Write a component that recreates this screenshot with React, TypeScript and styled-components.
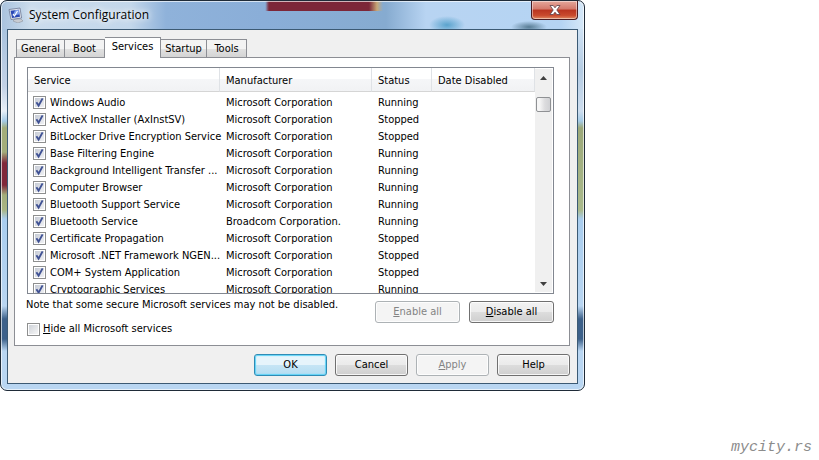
import React, { useState } from 'react';
import styled, { createGlobalStyle, css } from 'styled-components';

const uiFont = 'Tahoma, "DejaVu Sans Condensed", "Noto Sans", sans-serif';
const titleFont = '"Segoe UI", "Open Sans", "Noto Sans", sans-serif';

const GlobalStyle = createGlobalStyle`
  *, *::before, *::after { box-sizing: border-box; }
  html, body, #root { height: 100%; }
  body {
    margin: 0;
    background: #fff;
    color: #000;
    font-family: ${uiFont};
    font-size: 11px;
    line-height: 16px;
  }
  button, input { font: inherit; color: inherit; margin: 0; }
`;

const Page = styled.div`
  display: flex;
  flex-direction: column;
  justify-content: space-between;
  min-height: 100%;
`;

const Window = styled.main`
  width: 100%;
  max-width: 585px;
  padding: 0 6px 6px;
  border: 1px solid #1f2b38;
  border-radius: 7px;
  box-shadow: inset 0 0 0 1px rgba(255, 255, 255, 0.65);
  background:
    linear-gradient(90deg, #a9c2dd 0, #cbdcec 30px, #c3d7eb 130px, #8fb2da 165px, #8aaed8 262px, transparent 266px) 0 0 / 100% 28px no-repeat,
    linear-gradient(90deg, transparent 264px, #7c2638 268px, #7c2638 368px, #c7a877 376px, transparent 382px) 0 0 / 100% 10px no-repeat,
    radial-gradient(ellipse 18px 9px at 446px 24px, #5aa3cd, transparent) 0 0 / 100% 28px no-repeat,
    radial-gradient(ellipse 18px 6px at 528px 26px, #587c94, transparent) 0 0 / 100% 28px no-repeat,
    linear-gradient(90deg, #8aaed8 264px, #86abd0 385px, #b8d4f2 425px, #b5d4f3 560px, #d6e8f8 100%) 0 0 / 100% 28px no-repeat,
    linear-gradient(#a9c3de 28px, #c3d2e6 85px, #e7eff7 110px, #a5cbe6 120px, #a3ad7a 127px, #a3ad7a 151px, #80283a 162px, #80283a 184px, #a3ad7a 194px, #a9b584 209px, #a9cdee 218px, #b9d6f2 305px, #3d618a 318px, #3d618a 338px, #b9d6f2 350px) 0 0 / 7px 100% no-repeat,
    linear-gradient(#cfe2f4 28px, #b5cce3 70px, #cdddee 110px, #a5cbe6 120px, #9ca97a 127px, #aaba8c 209px, #a9cdee 218px, #b9d6f2 305px, #3d618a 318px, #3d618a 338px, #b9d6f2 350px) 100% 0 / 7px 100% no-repeat,
    #b9d6f2;
`;

const TitleBar = styled.header`
  display: flex;
  align-items: flex-start;
  height: 28px;
`;

const TitleIcon = styled.svg`
  flex: none;
  width: 16px;
  height: 16px;
  margin: 6px 5px 0 1px;
`;

const Title = styled.h1`
  flex: 1;
  margin: 6px 0 0;
  font-family: ${titleFont};
  font-size: 12px;
  font-weight: 400;
  line-height: 16px;
  text-shadow: 0 0 6px #fff, 0 0 8px #fff;
`;

const CloseButton = styled.button`
  display: flex;
  align-items: center;
  justify-content: center;
  width: 47px;
  height: 19px;
  padding: 0;
  border: 1px solid #4a1c22;
  border-top: 0;
  border-radius: 0 0 4px 4px;
  box-shadow: inset 0 0 0 1px rgba(255, 255, 255, 0.45);
  background: linear-gradient(#e5a79b, #d4796b 45%, #b93420 50%, #c94a2e 80%, #e08a63);
`;

const Client = styled.div`
  padding: 8px 7px 7px 6px;
  border: 1px solid #3c5a74;
  background: #f0f0f0;
`;

const TabBar = styled.div`
  display: flex;
  align-items: flex-end;
  height: 19px;
  padding-left: 2px;
`;

const Tab = styled.button<{ $active?: boolean; $width: number }>`
  width: ${(p) => p.$width}px;
  height: 18px;
  padding: 0;
  border: 1px solid #8c8e94;
  border-bottom: 0;
  text-align: center;
  white-space: nowrap;
  background: linear-gradient(#f3f3f3 50%, #e2e2e2 50%, #d4d4d4);
  & + & { border-left-width: 0; }
  ${(p) =>
    p.$active &&
    css`
      position: relative;
      align-self: flex-start;
      height: 21px;
      margin-bottom: -2px;
      margin-top: -1px;
      padding-bottom: 2px;
      background: #fff;
      && { border-left-width: 1px; }
    `}
`;

const Panel = styled.section`
  padding: 9px 15px 8px 12px;
  border: 1px solid #8c8e94;
  background: #fff;
`;

const ListView = styled.div`
  display: flex;
  height: 227px;
  border: 1px solid #828790;
  overflow: hidden;
`;

const TableArea = styled.div`
  flex: 1;
  min-width: 0;
  overflow: hidden;
`;

const Table = styled.table`
  width: 100%;
  table-layout: fixed;
  border-collapse: separate;
  border-spacing: 0;
  thead::after { content: ""; display: block; height: 2px; }
`;

const HeadCell = styled.th<{ $width?: number }>`
  width: ${(p) => (p.$width ? `${p.$width}px` : 'auto')};
  height: 24px;
  padding: 3px 0 0 6px;
  border-right: 1px solid #dfe2e6;
  border-bottom: 1px solid #d5d5d5;
  font-weight: 400;
  text-align: left;
  white-space: nowrap;
  background: linear-gradient(#fff 50%, #f5f6f8 50%, #f1f2f4);
`;

const Cell = styled.td`
  height: 17px;
  padding: 0 0 0 6px;
  line-height: 17px;
  white-space: nowrap;
  &:first-child { padding-left: 5px; }
`;

const RowLabel = styled.label`
  display: flex;
  align-items: center;
  gap: 4px;
`;

const CheckBox = styled.input`
  appearance: none;
  flex: none;
  width: 13px;
  height: 13px;
  border: 1px solid #8e8f8f;
  background: linear-gradient(135deg, #cfd3d9, #f6f6f6) content-box;
  padding: 1px;
  &:checked {
    background:
      url("data:image/svg+xml,%3Csvg xmlns='http://www.w3.org/2000/svg' viewBox='0 0 11 11'%3E%3Cpath d='M2.4 5.2 4.6 8.6 8.6 1.4' fill='none' stroke='%23405294' stroke-width='1.9'/%3E%3C/svg%3E") center / 11px 11px no-repeat,
      linear-gradient(135deg, #c6cbd5, #f0f1f4) content-box;
  }
`;

const ScrollBar = styled.div`
  display: flex;
  flex-direction: column;
  flex: none;
  width: 17px;
  margin: 1px 1px 1px 0;
  background: #f0f0f0;
`;

const ScrollArrow = styled.button`
  display: flex;
  align-items: center;
  justify-content: center;
  height: 17px;
  padding: 0;
  border: 0;
  background: transparent;
`;

const ScrollTrack = styled.div`
  flex: 1;
  padding: 11px 1px 0;
`;

const ScrollThumb = styled.div`
  height: 15px;
  border: 1px solid #8f9194;
  border-radius: 2px;
  background: linear-gradient(90deg, #f6f6f6 20%, #dcdcde 60%, #d0d1d4);
`;

const PanelFooter = styled.div`
  display: flex;
  justify-content: space-between;
  align-items: flex-start;
  padding-top: 3px;
`;

const Note = styled.p`
  margin: 0 0 8px -1px;
`;

const HideOption = styled.label`
  display: flex;
  align-items: center;
  gap: 3px;
`;

const ButtonRow = styled.div<{ $top: number }>`
  display: flex;
  justify-content: flex-end;
  gap: ${(p) => (p.$top > 5 ? 8 : 9)}px;
  padding-top: ${(p) => p.$top}px;
`;

const PushButton = styled.button<{ $wide?: boolean; $primary?: boolean }>`
  width: ${(p) => (p.$wide ? 85 : 73)}px;
  height: 22px;
  padding: 0;
  border: 1px solid ${(p) => (p.$primary ? '#2f8bb5' : '#707070')};
  border-radius: 3px;
  box-shadow: ${(p) =>
    p.$primary ? 'inset 0 0 1px 1px #5fd3f7' : 'inset 0 0 0 1px rgba(255, 255, 255, 0.8)'};
  background: ${(p) =>
    p.$primary
      ? 'linear-gradient(#e6f4fb 50%, #c6e5f5 50%, #b4ddf2)'
      : 'linear-gradient(#f2f2f2, #ebebeb 50%, #dddddd 50%, #cfcfcf)'};
  &:disabled {
    color: #838383;
    border-color: #adb2b5;
    background: #f4f4f4;
  }
`;

const Watermark = styled.footer`
  align-self: flex-end;
  padding: 0 7px 3px 0;
  color: #8c8c8c;
  font-family: "Liberation Mono", monospace;
  font-size: 15px;
  font-style: italic;
  line-height: 18px;
`;

const tabs = [
  { name: 'General', width: 49 },
  { name: 'Boot', width: 40 },
  { name: 'Services', width: 56 },
  { name: 'Startup', width: 46 },
  { name: 'Tools', width: 40 },
];

const ms = 'Microsoft Corporation';
const services = [
  ['Windows Audio', ms, 'Running'],
  ['ActiveX Installer (AxInstSV)', ms, 'Stopped'],
  ['BitLocker Drive Encryption Service', ms, 'Stopped'],
  ['Base Filtering Engine', ms, 'Running'],
  ['Background Intelligent Transfer ...', ms, 'Running'],
  ['Computer Browser', ms, 'Running'],
  ['Bluetooth Support Service', ms, 'Running'],
  ['Bluetooth Service', 'Broadcom Corporation.', 'Running'],
  ['Certificate Propagation', ms, 'Stopped'],
  ['Microsoft .NET Framework NGEN...', ms, 'Stopped'],
  ['COM+ System Application', ms, 'Stopped'],
  ['Cryptographic Services', ms, 'Running'],
];

export default function App() {
  const [active, setActive] = useState('Services');
  return (
    <Page>
      <GlobalStyle />
      <Window>
        <TitleBar>
          <TitleIcon viewBox="0 0 16 16" aria-hidden="true">
            <path d="M7 12h6l2 2-5 2-5-2z" fill="#c9ccd2" stroke="#8d939d" strokeWidth=".6" />
            <path d="M1 2.5 12 1l1.6 10L3 12.5z" fill="#dfe3ec" stroke="#6d7894" strokeWidth=".8" />
            <path d="M2.6 3.8 10.8 2.7l1.2 7L4 10.9z" fill="#2a47b4" />
            <path d="M7 3.2 10.8 2.7l.8 4.6L4.5 9z" fill="#7f9eea" />
            <path d="m5 7 1.5 2L9.5 4" fill="none" stroke="#fff" strokeWidth="1.2" />
          </TitleIcon>
          <Title>System Configuration</Title>
          <CloseButton aria-label="Close">
            <svg width="12" height="10" viewBox="0 0 12 10" aria-hidden="true">
              <path d="M1 .5h3.2L6 2.8 7.8.5H11L7.8 5 11 9.500H7.800L6 7.200 4.200 9.500H1L4.200 5z" fill="#fff" stroke="#5b4048" strokeWidth=".8" />
            </svg>
          </CloseButton>
        </TitleBar>
        <Client>
          <TabBar role="tablist">
            {tabs.map((t) => (
              <Tab
                key={t.name}
                role="tab"
                aria-selected={t.name === active}
                $active={t.name === active}
                $width={t.width}
                onClick={() => setActive(t.name)}
              >
                {t.name}
              </Tab>
            ))}
          </TabBar>
          <Panel>
            <ListView>
              <TableArea>
                <Table>
                  <thead>
                    <tr>
                      <HeadCell $width={192}>Service</HeadCell>
                      <HeadCell $width={152}>Manufacturer</HeadCell>
                      <HeadCell $width={60}>Status</HeadCell>
                      <HeadCell>Date Disabled</HeadCell>
                    </tr>
                  </thead>
                  <tbody>
                    {services.map(([name, maker, status]) => (
                      <tr key={name}>
                        <Cell>
                          <RowLabel>
                            <CheckBox type="checkbox" defaultChecked />
                            {name}
                          </RowLabel>
                        </Cell>
                        <Cell>{maker}</Cell>
                        <Cell>{status}</Cell>
                        <Cell />
                      </tr>
                    ))}
                  </tbody>
                </Table>
              </TableArea>
              <ScrollBar>
                <ScrollArrow aria-label="Scroll up">
                  <svg width="7" height="4" viewBox="0 0 7 4"><path d="M0 4 3.5 0 7 4z" fill="#404040" /></svg>
                </ScrollArrow>
                <ScrollTrack><ScrollThumb /></ScrollTrack>
                <ScrollArrow aria-label="Scroll down">
                  <svg width="7" height="4" viewBox="0 0 7 4"><path d="M0 0h7L3.5 4z" fill="#404040" /></svg>
                </ScrollArrow>
              </ScrollBar>
            </ListView>
            <PanelFooter>
              <div>
                <Note>Note that some secure Microsoft services may not be disabled.</Note>
                <HideOption>
                  <CheckBox type="checkbox" />
                  <span><u>H</u>ide all Microsoft services</span>
                </HideOption>
              </div>
              <ButtonRow $top={4}>
                <PushButton $wide disabled><u>E</u>nable all</PushButton>
                <PushButton $wide><u>D</u>isable all</PushButton>
              </ButtonRow>
            </PanelFooter>
          </Panel>
          <ButtonRow $top={8}>
            <PushButton $primary>OK</PushButton>
            <PushButton>Cancel</PushButton>
            <PushButton disabled><u>A</u>pply</PushButton>
            <PushButton>Help</PushButton>
          </ButtonRow>
        </Client>
      </Window>
      <Watermark>mycity.rs</Watermark>
    </Page>
  );
}
